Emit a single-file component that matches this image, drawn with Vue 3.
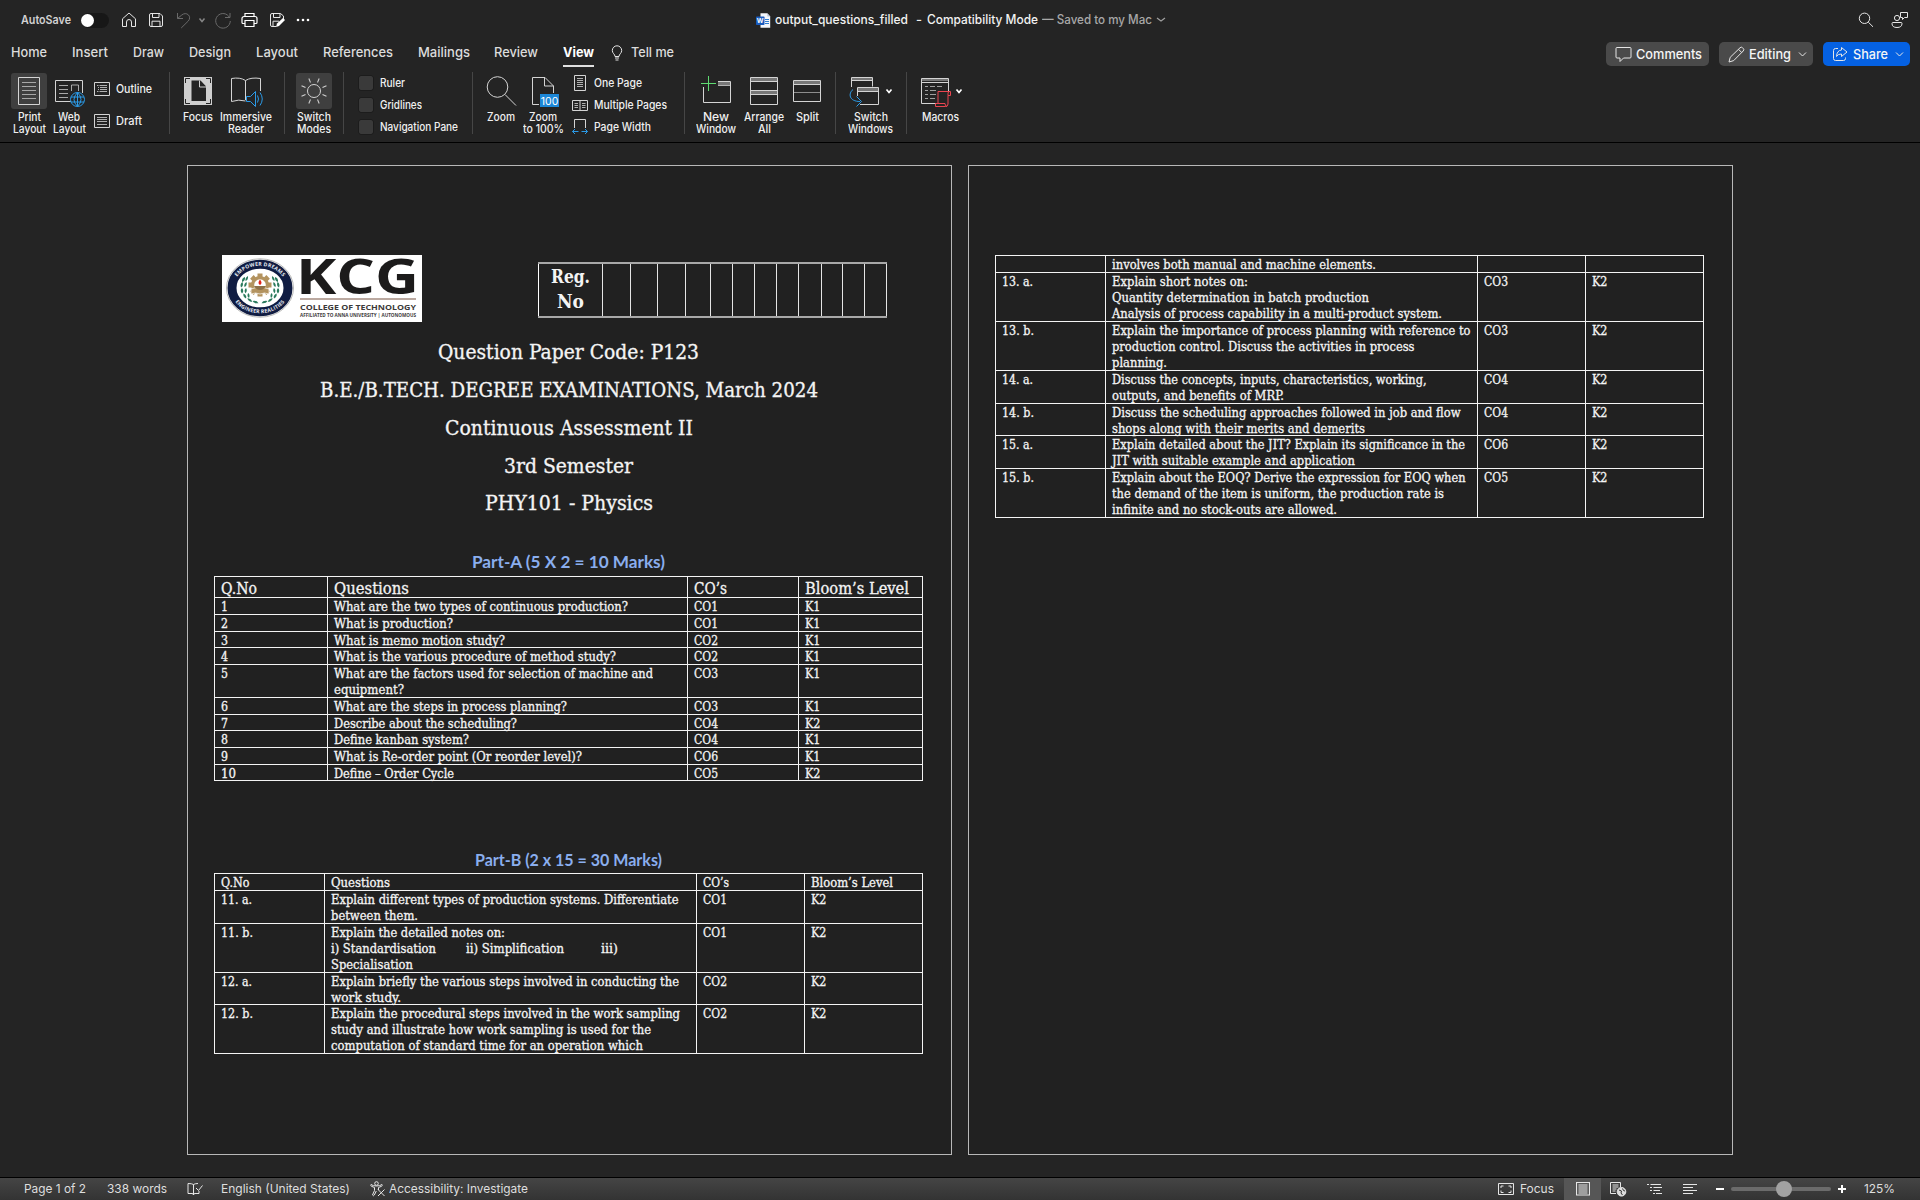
<script setup>
// v-fit="px": sets a run of text to an exact advance width, as the word processor's own metrics do.
const vFit = {
  mounted(el, { value }) {
    const natural = el.getBoundingClientRect().width
    if (!value || !natural) return
    el.style.width = value + 'px'
    el.style.transform = 'scaleX(' + value / natural + ')'
  },
}

const tabs = [
  ['Home', 36, 11], ['Insert', 36, 25], ['Draw', 31, 25], ['Design', 42, 25], ['Layout', 42, 25],
  ['References', 70, 25], ['Mailings', 52, 25], ['Review', 44, 24], ['View', 31, 25],
]
const checks = [['Ruler', 25], ['Gridlines', 42], ['Navigation Pane', 78]]
const regCols = [64, 28, 27, 28, 25, 22, 22, 22, 22, 23, 21, 22, 22]
const headings = [
  ['Question Paper Code: P123', 261, 38], ['B.E./B.TECH. DEGREE EXAMINATIONS, March 2024', 498, 38],
  ['Continuous Assessment II', 248, 38], ['3rd Semester', 129, 37], ['PHY101 - Physics', 168, 38],
]

const co = (n) => [['CO' + n, 24, 0]]
const k = (n) => [['K' + n, 15.5, 0]]
const row = (h, no, lines, c, l) => ({ h, cells: [no, lines.map((x) => (Array.isArray(x[0]) ? x : [x])), c, l] })
const one = (t, w) => [[[t, w, 0]]]
const q = (h, no, w, lines, c, l) => row(h, one(no, w), lines, [co(c)], [k(l)])

const tableA = [
  row(21, one('Q.No', 36), [['Questions', 75]], one('CO’s', 33), one('Bloom’s Level', 104)),
  q(17, '1', 7, [['What are the two types of continuous production?', 294]], 1, 1),
  q(17, '2', 7, [['What is production?', 119]], 1, 1),
  q(16, '3', 7, [['What is memo motion study?', 171]], 2, 1),
  q(17, '4', 7, [['What is the various procedure of method study?', 282]], 2, 1),
  q(33, '5', 7, [['What are the factors used for selection of machine and', 319], ['equipment?', 70]], 3, 1),
  q(17, '6', 7, [['What are the steps in process planning?', 233]], 3, 1),
  q(16, '7', 7, [['Describe about the scheduling?', 183]], 4, 2),
  q(17, '8', 7, [['Define kanban system?', 135]], 4, 1),
  q(17, '9', 7, [['What is Re-order point (Or reorder level)?', 248]], 6, 1),
  q(16, '10', 15, [['Define – Order Cycle', 120]], 5, 2),
]
const tableB = [
  row(17, one('Q.No', 28.5), [['Questions', 59]], one('CO’s', 26), one('Bloom’s Level', 82)),
  q(33, '11. a.', 31, [['Explain different types of production systems. Differentiate', 347.5], ['between them.', 87]], 1, 2),
  q(49, '11. b.', 32, [['Explain the detailed notes on:', 174], [['i) Standardisation', 105, 0], ['ii) Simplification', 98, 30], ['iii)', 17, 37]], ['Specialisation', 82]], 1, 2),
  q(32, '12. a.', 31, [['Explain briefly the various steps involved in conducting the', 348], ['work study.', 70]], 2, 2),
  q(49, '12. b.', 32, [['Explain the procedural steps involved in the work sampling', 349], ['study and illustrate how work sampling is used for the', 320], ['computation of standard time for an operation which', 312]], 2, 2),
]
const tableC = [
  row(17, [], [['involves both manual and machine elements.', 264]], [], []),
  q(49, '13. a.', 31, [['Explain short notes on:', 136], ['Quantity determination in batch production', 257], ['Analysis of process capability in a multi-product system.', 330]], 3, 2),
  q(49, '13. b.', 32, [['Explain the importance of process planning with reference to', 358.5], ['production control. Discuss the activities in process', 302.5], ['planning.', 55]], 3, 2),
  q(33, '14. a.', 31, [['Discuss the concepts, inputs, characteristics, working,', 314.5], ['outputs, and benefits of MRP.', 172]], 4, 2),
  q(32, '14. b.', 32, [['Discuss the scheduling approaches followed in job and flow', 348.5], ['shops along with their merits and demerits', 253]], 4, 2),
  q(33, '15. a.', 31, [['Explain detailed about the JIT? Explain its significance in the', 353], ['JIT with suitable example and application', 243]], 6, 2),
  q(49, '15. b.', 32, [['Explain about the EOQ? Derive the expression for EOQ when', 353.5], ['the demand of the item is uniform, the production rate is', 332], ['infinite and no stock-outs are allowed.', 225]], 5, 2),
]
const colsA = [113, 360, 111, 124]
const colsB = [110, 372, 108, 118]
const page1 = [
  { cls: 'part-a', title: 'Part-A (5 X 2 = 10 Marks)', w: 193, rows: tableA, cols: colsA, big: true },
  { cls: 'part-b', title: 'Part-B (2 x 15 = 30 Marks)', w: 187, rows: tableB, cols: colsB, big: false },
]
const leaves = ['M23 22q-3.5 1-3 5q3.500-1 3-5z', 'M20.500 27q-3 2-1.500 5.500q3-2 1.500-5.500z', 'M20 33q-2.500 2.500 0 5.500q2.500-2.500 0-5.500z', 'M21.500 38.500q-1 3 2.500 5q1.200-3.200-2.500-5z', 'M25.500 43q0 3.200 4.500 4q0-3-4.500-4z', 'M30.500 46q1.500 3 6 2.200q-1.500-3-6-2.200z', 'M26 21q.5 4-2.500 5q-.5-3.500 2.500-5z', 'M24.500 27q1 3.500-2 5q-1-3 2-5z', 'M24 33q1.800 2.800-.5 5.200q-2-2.600.5-5.200z', 'M26.200 38q2.200 2 .8 5q-2.600-2-.8-5z']
const rays = [0, 45, 90, 135, 180, 225, 270, 315]
const teeth = [0, 45, 90, 135, 180, 225, 270, 315]
</script>

<template>
  <div class="window">
    <header class="titlebar">
      <span v-fit="50" class="t autosave">AutoSave</span>
      <span class="toggle"><i></i></span>
      <svg class="ic home" width="16" height="16" viewBox="0 0 16 16"><path d="M1.500 6.800 8 1l6.500 5.800v7.700h-4V10a2.500 2.500 0 0 0-5 0v4.500h-4z" /></svg>
      <svg class="ic save" width="16" height="16" viewBox="0 0 16 16"><path d="M1.500 3A1.500 1.500 0 0 1 3 1.500h9L14.500 4v9a1.500 1.500 0 0 1-1.500 1.500H3A1.500 1.500 0 0 1 1.500 13zM4.500 1.500v4h6.500v-4M4 14.500V9.200h8v5.300" /></svg>
      <svg class="ic dim undo" width="16" height="17" viewBox="0 0 16 17"><path d="M1.500 1v5.500H7M1.500 6.500 5.800 3C8 1.200 10.500 1.200 12.300 2.800c1.800 1.700 1.700 4.300 0 6.200L5.200 16" /></svg>
      <svg class="ic dim2 uchev" width="8" height="6" viewBox="0 0 8 6"><path d="m1.500 1.500 2.500 3 2.500-3" stroke-width="1.500" /></svg>
      <svg class="ic dim redo" width="18" height="17" viewBox="0 0 18 17"><path d="M16 1v4.500h-5M15.500 5.500A7.300 7.300 0 1 0 16.300 9" /></svg>
      <svg class="ic print" width="17" height="16" viewBox="0 0 17 16"><path d="M4 4.500V1.500h9v3M4 11.500H2a1 1 0 0 1-1-1v-4a2 2 0 0 1 2-2h11a2 2 0 0 1 2 2v4a1 1 0 0 1-1 1h-2M4 8.500h9v6H4z" stroke-width="1.200" /></svg>
      <svg class="ic saveas" width="17" height="16" viewBox="0 0 17 16"><path d="M7 14.500H3A1.500 1.500 0 0 1 1.500 13V3A1.500 1.500 0 0 1 3 1.500h8.500L14.500 4v3M4.500 1.500v4H11v-4M4 14.500V9.200h6" /><path d="m7 15 1-3.500L14 6l2 2-6 6z" fill="#fff" stroke="none" /></svg>
      <svg class="ic dots" width="14" height="4" viewBox="0 0 14 4"><g fill="#fff" stroke="none"><circle cx="2" cy="2" r="1.300" /><circle cx="7" cy="2" r="1.300" /><circle cx="12" cy="2" r="1.300" /></g></svg>

      <svg class="wordicon" width="15" height="15" viewBox="0 0 15 15"><path d="M4.500.3h6.800L14.200 3.500v11.200H4.500z" fill="#f4f6fa" /><path d="M11.300.3v3.200h2.900z" fill="#b9c6da" /><path d="M9 6.500h4M9 8.500h4M9 10.500h4" stroke="#2b7cd3" /><rect y="3.500" width="8.500" height="8.500" rx=".8" fill="#185abd" /><text x="4.200" y="10" text-anchor="middle" class="w">W</text></svg>
      <span v-fit="133" class="t bright fname">output_questions_filled</span>
      <span v-fit="6" class="t bright dash">-</span>
      <span v-fit="111" class="t bright">Compatibility Mode</span>
      <span v-fit="110" class="t saved">— Saved to my Mac</span>
      <svg class="ic grey tchev" width="10" height="6" viewBox="0 0 10 6"><path d="m1 1 4 3 4-3" stroke-width="1.200" /></svg>

      <svg class="ic search" width="16" height="16" viewBox="0 0 16 16"><circle cx="6.500" cy="6.300" r="5.200" /><path d="m10.300 10.200 4.700 4.600" /></svg>
      <svg class="ic people" width="18" height="18" viewBox="0 0 18 18"><circle cx="6" cy="7" r="2.600" /><path d="M1 12.500q0-1 1-1h8q1 0 1 1 0 4-5 4t-5-4zM9.500 1.500h7v5h-3l-2 2v-2h-2z" /></svg>
    </header>

    <nav class="tabs">
      <span v-for="t in tabs" :key="t[0]" class="tab" :class="{ on: t[0] === 'View' }" :style="{ marginLeft: t[2] + 'px' }"><span v-fit="t[1]" class="t">{{ t[0] }}</span></span>
      <svg class="ic bulb" width="12" height="16" viewBox="0 0 12 16"><path d="M4 11.500C4 9 1.300 8.500 1.300 5.500a4.700 4.700 0 0 1 9.400 0C10.700 8.500 8 9 8 11.500zM4 13h4M4.500 15h3" /></svg>
      <span v-fit="43" class="t tell">Tell me</span>
      <div class="btn comments">
        <svg class="ic" width="17" height="17" viewBox="0 0 17 17"><path d="M2 1.500h13a1 1 0 0 1 1 1v8.500a1 1 0 0 1-1 1H8.500L5 15.500V12H2a1 1 0 0 1-1-1V2.500a1 1 0 0 1 1-1z" /></svg>
        <span v-fit="66" class="t">Comments</span>
      </div>
      <div class="btn editing">
        <svg class="ic" width="17" height="17" viewBox="0 0 17 17"><path d="m1 16 1.200-4.700L12 1.800a1.800 1.800 0 0 1 2.600 0l.6.600a1.800 1.800 0 0 1 0 2.600L5.700 14.600zM10.500 3.300l3.200 3.200" /></svg>
        <span v-fit="42" class="t">Editing</span>
        <svg class="ic chev" width="9" height="7" viewBox="0 0 9 7"><path d="m1 1.500 3.500 3.500L8 1.500" /></svg>
      </div>
      <div class="btn share">
        <svg class="ic" width="16" height="16" viewBox="0 0 16 16"><path d="M6 2.500H3.500a2 2 0 0 0-2 2v8a2 2 0 0 0 2 2h8a2 2 0 0 0 2-2v-1M9.500 1.500 15 6l-5.500 4.500V8Q6 7.800 4.500 10.500 5 4.300 9.500 4z" /></svg>
        <span v-fit="35" class="t">Share</span>
        <svg class="ic chev" width="9" height="7" viewBox="0 0 9 7"><path d="m1 1.500 3.500 3.500L8 1.500" /></svg>
      </div>
    </nav>

    <section class="ribbon">
      <div class="tool" style="width: 36px; margin-left: 11px">
        <div class="face lit"><svg class="ic rb" width="36" height="36" viewBox="0 0 36 36"><path d="M7.500 4.500h21v27h-21z" /><path d="M11 9.500h14M11 13.500h14M11 17.500h14M11 21.500h14M11 25.500h14" opacity=".7" /></svg></div>
        <span v-fit="23" class="t">Print</span><span v-fit="33" class="t">Layout</span>
      </div>
      <div class="tool" style="width: 36px; margin-left: 4px">
        <div class="face"><svg class="ic rb" width="36" height="36" viewBox="0 0 36 36"><path d="M20 28.500H4.500v-21h27V20M31.500 18v2" /><path d="M8 12.500h9M8 16.500h9M8 20.500h9M8 24.500h9M20.500 18v-6h7v6" opacity=".75" /><g stroke="#2b9be8" fill="#242424"><circle cx="26.500" cy="26.500" r="7" /><path d="M26.500 19.500q-7 7 0 14M26.500 19.500q7 7 0 14M26.500 19.500v14M20 24h13M20 29h13" fill="none" /></g></svg></div>
        <span v-fit="22" class="t">Web</span><span v-fit="33" class="t">Layout</span>
      </div>
      <div class="stack two" style="margin-left: 7px">
        <div><svg class="ic rb" width="16" height="14" viewBox="0 0 16 14"><path d="M.5.500h15v13H.5z" /><path d="M3 3.500h1.500M5.500 3.500H13M4 5.500h1M6 5.500h7M4 7.500h1M6 7.500h7M3 9.500h1.500M5.500 9.500H13" opacity=".8" /></svg><span v-fit="36" class="t">Outline</span></div>
        <div><svg class="ic rb" width="16" height="14" viewBox="0 0 16 14"><path d="M.5.500h15v13H.5z" /><path d="M3 3.500h10M3 5.500h10M3 7.500h10M3 10.500h10" opacity=".8" /></svg><span v-fit="26" class="t">Draft</span></div>
      </div>
      <i class="sep" style="margin-left: 17px"></i>
      <div class="tool" style="width: 36px; margin-left: 10px">
        <div class="face"><svg width="36" height="36" viewBox="0 0 36 36"><path d="M4 4h28v28H4z" fill="#cfcfcf" /><path d="M11.500 7.500h9l5.500 6v14.500H11.500z" fill="#242424" /><path d="M19.500 7.500v6.500h6.500" fill="none" stroke="#cfcfcf" /><path d="m20.500 8 5 5h-5z" fill="#242424" /><path d="M5.500 10V5.500H10M26 5.500h4.500V10M30.500 26v4.500H26M10 30.500H5.500V26" fill="none" stroke="#242424" /></svg></div>
        <span v-fit="30" class="t">Focus</span>
      </div>
      <div class="tool" style="width: 52px; margin-left: 4px">
        <div class="face"><svg class="ic rb" width="36" height="36" viewBox="0 0 36 36"><path d="M17.500 28Q11 26 3.500 28.500v-23Q12 4 17.500 7.500 23 4 32.500 5.500V18M17.500 7.500V27" /><path d="M18.500 23.500h4l5-5v15l-5-5h-4zM29.500 22.500q2 3.500 0 7M32 19.500q4.500 6.500 0 13" stroke="#2b9be8" /></svg></div>
        <span v-fit="52" class="t">Immersive</span><span v-fit="36" class="t">Reader</span>
      </div>
      <i class="sep" style="margin-left: 12px"></i>
      <div class="tool" style="width: 36px; margin-left: 11px">
        <div class="face lit"><svg class="ic rb" width="36" height="36" viewBox="0 0 36 36"><circle cx="18" cy="18" r="6.500" /><path v-for="r in rays" :key="r" d="M18 8.800V4.500" :transform="`rotate(${r + 22.500} 18 18)`" /></svg></div>
        <span v-fit="34" class="t">Switch</span><span v-fit="34" class="t">Modes</span>
      </div>
      <i class="sep" style="margin-left: 11px"></i>
      <div class="stack checks" style="margin-left: 15px">
        <div v-for="c in checks" :key="c[0]"><b></b><span v-fit="c[1]" class="t">{{ c[0] }}</span></div>
      </div>
      <i class="sep" style="margin-left: 13px"></i>
      <div class="tool" style="width: 36px; margin-left: 10px">
        <div class="face"><svg class="ic rb" width="36" height="36" viewBox="0 0 36 36"><circle cx="14.500" cy="14" r="10.300" /><path d="m22 21.500 11 11" /></svg></div>
        <span v-fit="28" class="t">Zoom</span>
      </div>
      <div class="tool" style="width: 42px; margin-left: 3px">
        <div class="face"><svg class="ic rb" width="36" height="36" viewBox="0 0 36 36"><path d="M14 31.500H7.500v-27h12.500l8.500 8.500V20M19.500 4.500V13h9" /><path d="M15 21h19v13H15z" fill="#1c87d8" stroke="none" /><text x="24.500" y="31.500" text-anchor="middle" class="n100">100</text></svg></div>
        <span v-fit="28" class="t">Zoom</span><span v-fit="41" class="t">to 100%</span>
      </div>
      <div class="stack three" style="margin-left: 8px">
        <div><svg class="ic rb" width="16" height="16" viewBox="0 0 16 16"><path d="M2.500.500h11v15h-11z" /><path d="M5 3.500h6M5 5.500h6M5 7.500h6M5 9.500h6M5 11.500h6" opacity=".8" /></svg><span v-fit="48" class="t">One Page</span></div>
        <div><svg class="ic rb" width="16" height="16" viewBox="0 0 16 16"><path d="M.5 3.500h15v10H.5zM8 3.500v10" /><path d="M2.500 6.500H6M2.500 8.500H6M2.500 10.500H6M10 6.500h3.500M10 8.500h3.500M10 10.500h3.500" opacity=".8" /></svg><span v-fit="73" class="t">Multiple Pages</span></div>
        <div><svg class="ic rb" width="16" height="16" viewBox="0 0 16 16"><path d="M2.500 9V.500h11V9" /><path d="M6.500 12.500h-6M3 10l-2.500 2.500L3 15M9.500 12.500h6M13 10l2.500 2.500L13 15" stroke="#2b9be8" /></svg><span v-fit="57" class="t">Page Width</span></div>
      </div>
      <i class="sep" style="margin-left: 17px"></i>
      <div class="tool" style="width: 40px; margin-left: 11px">
        <div class="face"><svg class="ic rb" width="36" height="36" viewBox="0 0 36 36"><path d="M5.500 14v15.500h27v-21H20" /><path d="M20 9h12v3H20z" fill="#777" stroke="none" /><path d="M20 12.500h12" opacity=".8" /><path d="M10.500 3v15M3 10.500h15" stroke="#5fdc72" /></svg></div>
        <span v-fit="26" class="t">New</span><span v-fit="40" class="t">Window</span>
      </div>
      <div class="tool" style="width: 40px; margin-left: 8px">
        <div class="face"><svg class="ic rb" width="36" height="36" viewBox="0 0 36 36"><path d="M4.500 5h27v3h-27zM4.500 18h27v3h-27z" fill="#777" stroke="none" /><path d="M4.500 4.500h27v27h-27zM4.500 8.500h27M4.500 17.500h27M4.500 21.500h27" /></svg></div>
        <span v-fit="40" class="t">Arrange</span><span v-fit="13" class="t">All</span>
      </div>
      <div class="tool" style="width: 36px; margin-left: 5px">
        <div class="face"><svg class="ic rb" width="36" height="36" viewBox="0 0 36 36"><path d="M4.500 8h27v3h-27z" fill="#777" stroke="none" /><path d="M4.500 7.500h27v21h-27zM4.500 11.500h27" /><path d="M4.500 19.500h27" opacity=".6" /></svg></div>
        <span v-fit="23" class="t">Split</span>
      </div>
      <i class="sep" style="margin-left: 10px"></i>
      <div class="tool" style="width: 45px; margin-left: 12px">
        <div class="face wide"><svg class="ic rb" width="45" height="36" viewBox="0 0 45 36"><path d="M3.500 5h21v2h-21zM9.500 15h21v3h-21z" fill="#777" stroke="none" /><path d="M3.500 14V4.500h21v9M3.500 7.500h21M12 31.500h18.500v-17h-21V23M9.500 18.500h21" /><path d="M5 16.500c-5 4-4 12 7 12M8.500 23.500l5 5-5 5" stroke="#2b9be8" /><path d="m38.500 16.500 2.500 3 2.500-3" stroke="#fff" stroke-width="1.700" /></svg></div>
        <span v-fit="34" class="t">Switch</span><span v-fit="45" class="t">Windows</span>
      </div>
      <i class="sep" style="margin-left: 13px"></i>
      <div class="tool" style="width: 45px; margin-left: 11px">
        <div class="face wide"><svg class="ic rb" width="45" height="36" viewBox="0 0 45 36"><path d="M3.500 6h27v2h-27z" fill="#777" stroke="none" /><path d="M18 30.500H3.500v-25h27V18M3.500 9.500h27" /><path d="M7 13.500h3M12 13.500h5M19 13.500h5M7 17.500h3M12 17.500h6M7 21.500h3M12 21.500h6M7 25.500h3M12 25.500h5" opacity=".7" /><path d="M20 30V18.500h12.500v4H30V31q0 2.500-2.500 2.500h-10V30.500h9.500q0 3 2 3M30 22.500v-2q0-2 1.500-2" stroke="#ea4550" /><path d="m38.500 16.500 2.500 3 2.500-3" stroke="#fff" stroke-width="1.700" /></svg></div>
        <span v-fit="37" class="t">Macros</span>
      </div>
    </section>

    <main class="canvas">
      <article class="page">
        <div class="masthead">
          <svg class="logo" width="200" height="67" viewBox="0 0 200 67">
            <rect width="200" height="67" fill="#fff" />
            <ellipse cx="38" cy="33" rx="33.500" ry="29.200" fill="#fff" stroke="#9a9a96" stroke-width=".7" />
            <ellipse cx="38" cy="33" rx="28" ry="23.800" fill="none" stroke="#101c42" stroke-width="9" />
            <defs><path id="arcTop" d="M11.500 33a26.500 22.200 0 0 1 53 0" /><path id="arcBottom" d="M8.500 33a29.500 25.300 0 0 0 59 0" /></defs>
            <text class="seal"><textPath href="#arcTop" startOffset="50%" text-anchor="middle">EMPOWER DREAMS</textPath></text>
            <text class="seal"><textPath href="#arcBottom" startOffset="50%" text-anchor="middle">ENGINEER REALITIES</textPath></text>
            <g fill="#2a7a5c"><path v-for="d in leaves" :key="d" :d="d" /><g transform="translate(76 0) scale(-1 1)"><path v-for="d in leaves" :key="d" :d="d" /></g></g>
            <g fill="#b3935f"><rect v-for="a in teeth" :key="a" x="35.500" y="18.500" width="5" height="5" :transform="`rotate(${a} 38 30)`" /><circle cx="38" cy="30" r="9" /></g>
            <circle cx="38" cy="30" r="5.800" fill="#fff" />
            <path d="M29 34q4.500-2.500 9 0 4.500-2.500 9 0v5q-4.500-2-9 0-4.500-2-9 0z" fill="#b3935f" stroke="#fff" stroke-width=".7" />
            <path d="M32 31h12q-2 4-6 4t-6-4z" fill="#8d7148" />
            <path d="M38 24.500q3 3.500 0 5.500-3-2 0-5.500z" fill="#e2231a" />
            <text x="74" y="38.500" textLength="123" lengthAdjust="spacingAndGlyphs" class="kcg">KCG</text>
            <path d="M78 44h116" stroke="#a58c80" stroke-width="1.300" />
            <text x="78" y="54.800" textLength="116" lengthAdjust="spacingAndGlyphs" class="college">COLLEGE OF TECHNOLOGY</text>
            <text x="78" y="62" textLength="116" lengthAdjust="spacingAndGlyphs" class="affil">AFFILIATED TO ANNA UNIVERSITY | AUTONOMOUS</text>
          </svg>
          <div class="reg">
            <div v-for="(w, i) in regCols" :key="i" :style="{ width: w + 'px' }">
              <template v-if="i === 0"><span v-fit="39" class="s">Reg.</span><span v-fit="27" class="s">No</span></template>
            </div>
          </div>
        </div>
        <h1 v-for="h in headings" :key="h[0]" :style="{ height: h[2] + 'px' }"><span v-fit="h[1]" class="s">{{ h[0] }}</span></h1>
        <section v-for="p in page1" :key="p.title" :class="p.cls">
          <h2><span v-fit="p.w" class="s">{{ p.title }}</span></h2>
          <div class="grid" :class="{ big: p.big }">
            <div v-for="(r, ri) in p.rows" :key="ri" class="row" :style="{ height: r.h + 'px' }">
              <div v-for="(c, ci) in r.cells" :key="ci" class="cell" :style="{ width: p.cols[ci] + 'px' }">
                <p v-for="(line, li) in c" :key="li"><span v-for="s in line" :key="s[0]" v-fit="s[1]" class="s" :style="{ marginLeft: (s[2] || 0) + 'px' }">{{ s[0] }}</span></p>
              </div>
            </div>
          </div>
        </section>
      </article>

      <article class="page second">
        <div class="grid">
          <div v-for="(r, ri) in tableC" :key="ri" class="row" :style="{ height: r.h + 'px' }">
            <div v-for="(c, ci) in r.cells" :key="ci" class="cell" :style="{ width: colsB[ci] + 'px' }">
              <p v-for="(line, li) in c" :key="li"><span v-for="s in line" :key="s[0]" v-fit="s[1]" class="s">{{ s[0] }}</span></p>
            </div>
          </div>
        </div>
      </article>
    </main>

    <footer class="status">
      <span v-fit="62" class="t" style="margin-left: 24px">Page 1 of 2</span>
      <span v-fit="60" class="t" style="margin-left: 21px">338 words</span>
      <svg class="ic" style="margin-left: 20px" width="16" height="14" viewBox="0 0 16 14"><path d="M6.500 2.500Q5 1.500 1 1.500V11.500h4q1.500 0 1.500 1.500 0-1.500 1.500-1.500h4V9M6.500 12.500V2.500Q8 1.500 11 1.500M9 6l2.500 2.500 4-5" /></svg>
      <span v-fit="129" class="t" style="margin-left: 18px">English (United States)</span>
      <svg class="ic" style="margin-left: 20px" width="16" height="16" viewBox="0 0 16 16"><circle cx="6.500" cy="2.500" r="1.800" /><path d="M1 3.500q-.8 1.200.5 1.800L4.500 6.500v3L2.500 14q.8 1.500 1.800 0l2-4M12 3.500q.8 1.200-.5 1.800L8.500 6.500v2.500M1 3.500q2 1.500 5.500 1.500T12 3.500M8 8.500l6.500 6.500M14.500 8.500 8 15" /></svg>
      <span v-fit="139" class="t" style="margin-left: 3px">Accessibility: Investigate</span>
      <svg class="ic focusic" width="16" height="12" viewBox="0 0 16 12"><path d="M.5.500h15v11H.5z" /><path d="M3 5V3h2.500M10.500 3H13v2M13 7.500v2h-2.500M5.500 9.500H3v-2" /></svg>
      <span v-fit="34" class="t" style="margin-left: 6px">Focus</span>
      <div class="active"><svg class="ic" width="14" height="14" viewBox="0 0 14 14"><path d="M.5.500h13v12.500H.5zM2.500 3h9M2.500 5h9M2.500 7h9M2.500 9h9M2.500 11h9" stroke-width="1.100" /></svg></div>
      <svg class="ic" style="margin-left: 9px" width="17" height="15" viewBox="0 0 17 15"><path d="M6 11.500H.5v-11h10V5M2.500 3h6M2.500 5h6M2.500 7h4M2.500 9h3" /><circle cx="11.500" cy="9.800" r="4.300" fill="#ddd" /><path d="M9 8l2.500 1-.5 2 1.500 2M12.500 6.500l1 2 1.500.5" stroke="#333" /></svg>
      <svg class="ic" style="margin-left: 20px" width="16" height="12" viewBox="0 0 16 12"><path d="M0 1.500h2M3.500 1.500H14M3 4.500h2M6.500 4.500H15M3 7.500h2M6.500 7.500H13M6 10.500h2M9 10.500h6" /></svg>
      <svg class="ic" style="margin-left: 20px" width="15" height="12" viewBox="0 0 15 12"><path d="M0 1.500h14M0 4.500h10M0 7.500h14M0 10.500h10" /></svg>
      <i class="minus"></i>
      <div class="slider"><i></i></div>
      <svg class="plus" width="8" height="8" viewBox="0 0 8 8"><path d="M4 0v8M0 4h8" stroke="#fff" stroke-width="2" /></svg>
      <span v-fit="31" class="t" style="margin-left: 18px">125%</span>
    </footer>
  </div>
</template>

<style>
html, body { margin: 0; background: #242424; }
</style>

<style scoped>
.window { width: 1920px; height: 1200px; overflow: hidden; background: #242424; color: #e2e2e2; font-family: Inter, "Liberation Sans", sans-serif; display: flex; flex-direction: column; }
svg { flex: none; display: block; }
.ic { fill: none; stroke: #e6e6e6; stroke-width: 1; }
.t, .s { display: inline-block; flex: none; white-space: nowrap; transform-origin: 0 50%; text-align: left; }
.titlebar { height: 40px; display: flex; align-items: center; font-size: 12.5px; font-weight: 500; flex: none; }
.titlebar > .t { position: relative; top: -.5px; }
.autosave { margin-left: 21px; color: #d2d2d2; font-size: 11.500px; font-weight: 600; }
.toggle { margin-left: 10px; width: 28px; height: 15px; border-radius: 8px; background: #171717; display: flex; align-items: center; }
.toggle i { width: 13px; height: 13px; border-radius: 50%; background: #fff; }
.home { margin-left: 12px; }
.save { margin-left: 11px; }
.dim { stroke: #6a6a6a; }
.dim2 { stroke: #858585; }
.undo { margin-left: 12px; }
.uchev { margin-left: 6px; }
.redo { margin-left: 8px; }
.print { margin-left: 9px; stroke: #fff; }
.saveas { margin-left: 11px; }
.dots { margin-left: 10px; }
.wordicon { margin-left: 446px; }
.w { font: 700 6.500px Inter, sans-serif; fill: #fff; }
.bright { color: #f2f2f2; }
.fname { margin-left: 4px; }
.dash { margin: 0 5px 0 8px; }
.saved { margin-left: 4px; color: #a8a8a8; }
.grey { stroke: #a0a0a0; }
.tchev { margin-left: 4px; }
.search { margin-left: 692px; }
.people { margin-left: 17px; }
.tabs { height: 32px; display: flex; flex: none; font-size: 13.300px; font-weight: 500; }
.tab { height: 27px; line-height: 25px; box-sizing: border-box; }
.tab .t { color: #dcdcdc; }
.tab.on { border-bottom: 2px solid #e0e0e0; }
.tab.on .t { color: #fff; font-weight: 700; }
.bulb { margin: 5px 0 0 17px; }
.tell { margin-left: 8px; line-height: 25px; color: #dcdcdc; }
.btn { height: 24px; margin-top: 2px; border-radius: 5px; background: #4a4a4a; color: #f5f5f5; display: flex; align-items: center; flex: none; box-sizing: border-box; }
.comments { width: 103px; margin-left: 932px; padding-left: 9px; gap: 4px; }
.editing { width: 94px; margin-left: 10px; padding-left: 9px; gap: 4px; }
.editing .chev { margin-left: 3px; }
.share { width: 87px; margin-left: 10px; padding-left: 9px; gap: 5px; background: #0561e2; }
.share .chev { margin-left: 2px; }
.ribbon { height: 70px; display: flex; flex: none; border-bottom: 1px solid #000; font-size: 11.300px; font-weight: 500; color: #f0f0f0; }
.tool { display: flex; flex-direction: column; align-items: center; flex: none; }
.tool .t { line-height: 12px; }
.face { width: 36px; height: 36px; margin: 1px 0 2px; border-radius: 3px; display: flex; flex: none; }
.face.wide { width: 45px; }
.face.lit { background: #3f3f3f; }
.rb { stroke: #d4d4d4; }
.n100 { font: 400 10.500px Inter, sans-serif; fill: #fff; stroke: none; }
.sep { width: 1px; height: 62px; background: #464646; flex: none; }
.stack { display: flex; flex-direction: column; flex: none; }
.stack > div { display: flex; align-items: center; gap: 6px; height: 16px; }
.two { padding-top: 9px; gap: 16px; }
.three, .checks { padding-top: 3px; gap: 6px; }
.checks { width: 100px; }
.checks > div { gap: 7px; }
.checks b { width: 14px; height: 14px; background: #3a3a3a; border-radius: 2px; box-shadow: 0 0 0 .5px #151515; }
.canvas { flex: none; height: 1034px; box-sizing: border-box; padding: 22px 0 0 187px; display: flex; gap: 16px; align-items: flex-start; }
.page { width: 765px; height: 990px; box-sizing: border-box; border: 1px solid #b8b8b8; background: #212121; padding-top: 89px; font-family: "DejaVu Serif Condensed", "DejaVu Serif", serif; font-stretch: condensed; color: #f4f4f4; flex: none; -webkit-text-stroke: .3px currentColor; }
.logo, h2 { -webkit-text-stroke: 0; }
.masthead { display: flex; height: 79px; padding-left: 34px; }
.reg { display: flex; margin: 7px 0 0 116px; height: 56px; box-sizing: border-box; border: solid #a8a8a8; border-width: 2px 0 2px 0; box-shadow: inset 1px 0 #fff; font-size: 18.300px; font-weight: 700; padding-left: 1px; -webkit-text-stroke: 0; }
.reg div { box-sizing: border-box; border-right: 1px solid #e4e4e4; display: flex; flex-direction: column; align-items: center; line-height: 25px; flex: none; }
h1 { margin: 0; font-size: 19.500px; line-height: 38px; font-weight: 400; text-align: center; padding-right: 2px; }
h2 { margin: 0; font: 700 16.200px/20px Lato, sans-serif; color: #8aaeee; text-align: center; height: 20px; padding-right: 2px; }
.part-a { margin-top: 29px; }
.part-a .grid { margin-top: 4px; }
.part-b { margin-top: 69px; }
.part-b .grid { margin-top: 3px; }
.grid { width: 709px; box-sizing: border-box; margin-left: 26px; border: solid #f4f4f4; border-width: 1px 0 0 1px; font-size: 12.600px; line-height: 16px; }
.row { display: flex; box-sizing: border-box; border-bottom: 1px solid #f4f4f4; }
.cell { box-sizing: border-box; border-right: 1px solid #f4f4f4; padding: 1px 0 0 6px; flex: none; }
.cell p { margin: 0; height: 16px; white-space: nowrap; display: flex; }
.big .row:first-child { font-size: 16.200px; line-height: 21px; }
.kcg { font: 700 48.500px "Open Sans", sans-serif; fill: #1c1b1b; font-stretch: normal; }
.college { font: 700 7.400px "Open Sans", sans-serif; fill: #3c3a3a; }
.affil { font: 700 4.800px "Open Sans", sans-serif; fill: #3c3a3a; }
.seal { font: 700 5.200px "Open Sans", sans-serif; fill: #e8ecf5; letter-spacing: .2px; }
.status { height: 23px; box-sizing: border-box; border-top: 1px solid #000; background: linear-gradient(#454545, #333); display: flex; align-items: center; font-size: 12px; color: #dedede; flex: none; }
.status > .t { line-height: 14px; padding-bottom: 1px; }
.focusic { margin-left: 970px; }
.active { width: 37px; height: 23px; background: #565656; margin-left: 10px; display: flex; align-items: center; justify-content: center; }
.minus { width: 8px; height: 2px; background: #fff; margin-left: 18px; }
.slider { width: 100px; height: 4px; border-radius: 2px; background: #6b6b6b; margin-left: 7px; display: flex; align-items: center; }
.slider i { width: 16px; height: 16px; border-radius: 50%; background: #a2a2a2; margin-left: 45px; flex: none; }
.plus { margin-left: 7px; }
</style>
